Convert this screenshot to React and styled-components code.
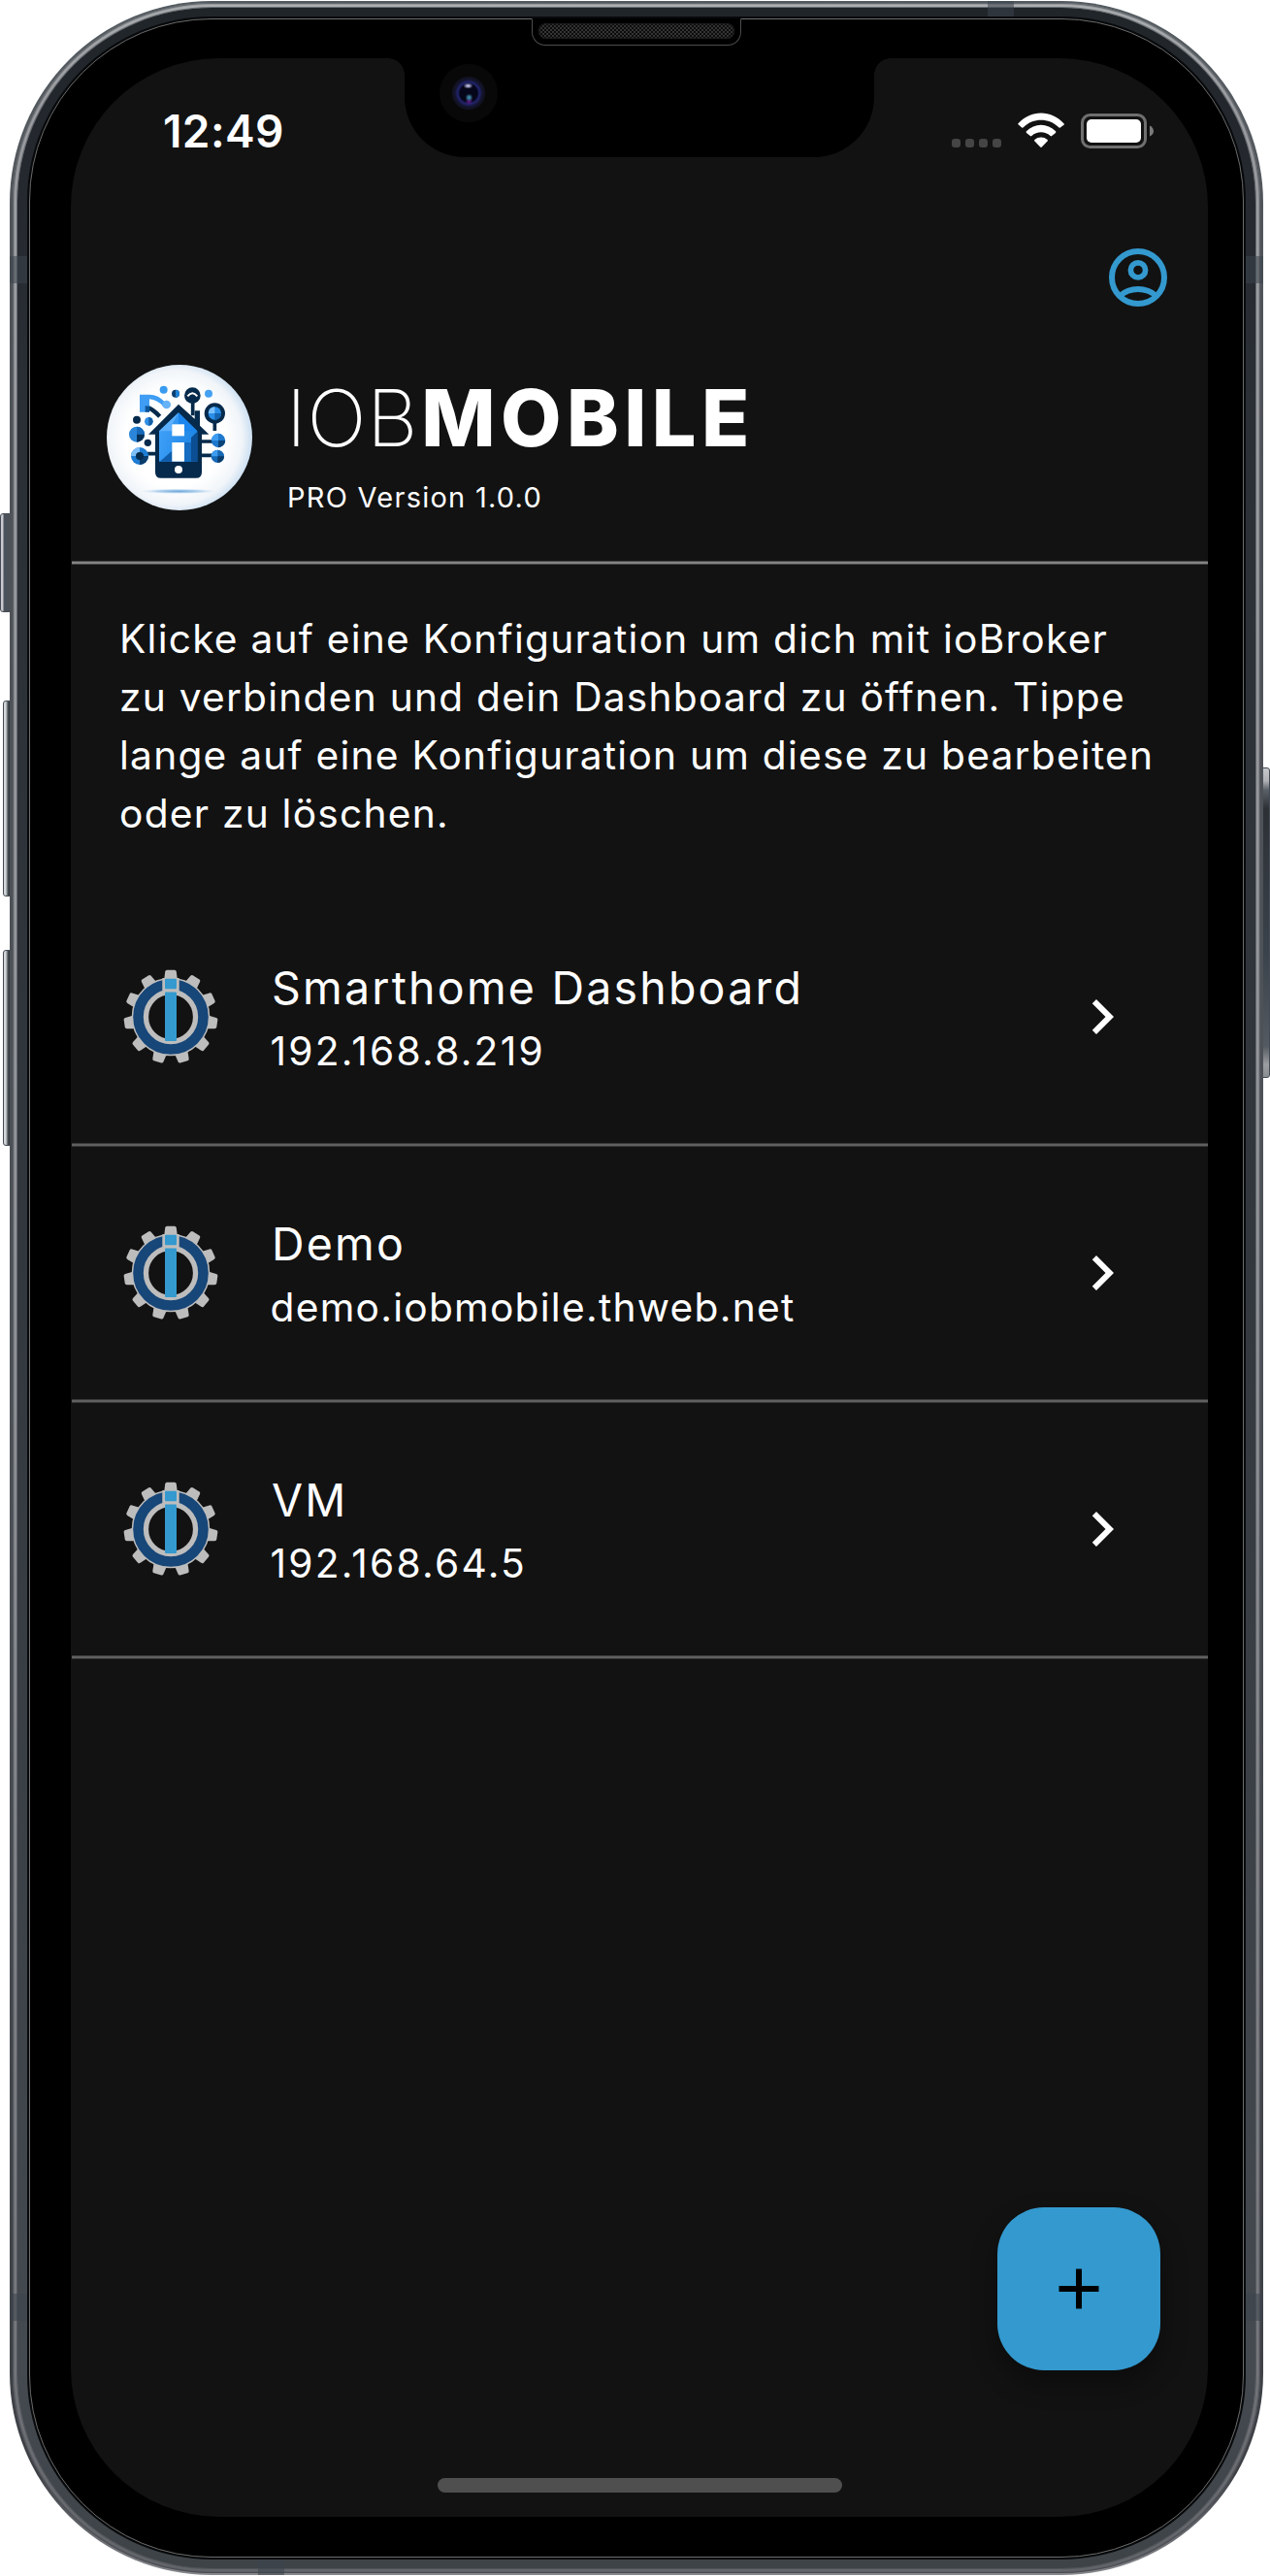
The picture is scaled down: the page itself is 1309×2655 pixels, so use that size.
import React from "react";
import styled, { createGlobalStyle } from "styled-components";

const GlobalStyle = createGlobalStyle`
  html, body { margin: 0; padding: 0; background: #fff; }
  * { box-sizing: border-box; }
`;

const ACCENT = "#3399cf";
const SURFACE = "#121212";

/* ---------- device ---------- */

const Device = styled.div`
  position: relative;
  width: 1309px;
  height: 2655px;
  padding: 1px 7px 1px 10px;
  overflow: hidden;
  background: #fff;
  font-family: Inter, "Liberation Sans", sans-serif;
  color: #fff;
`;

const Rim = styled.div`
  position: relative;
  height: 100%;
  padding: 2px 3px;
  border-radius: 208px;
  background: linear-gradient(#535b60, #50545a 10%, #4b4f56 60%, #3c3f44 96%, #85878c);
`;

const Highlight = styled.div`
  height: 100%;
  padding: 5px;
  border-radius: 205px;
  background: linear-gradient(#b4b7b9, #a2a4a8 4%, #96989d 50%, #77797e 92%, #66686d);
  box-shadow: inset 0 0 2px 1px rgba(60, 64, 70, 0.9);
`;

const Band = styled.div`
  height: 100%;
  padding: 9px 10px;
  border-radius: 200px;
  background: linear-gradient(#20252a, #2a2e35 15%, #33373e 50%, #444a50 92%, #3d4347);
  box-shadow: 0 0 1px 1px rgba(70, 74, 80, 0.7);
`;

const Gasket = styled.div`
  height: 100%;
  padding: 2px;
  border-radius: 190px;
  background: #07090b;
`;

const Glass = styled.div`
  position: relative;
  height: 100%;
  padding: 40px 36px 41px 42px;
  border: 1px solid #6c6c6c;
  border-radius: 188px;
  background: #000;
`;

const SideButton = styled.div`
  position: absolute;
  left: ${(p) => p.$x}px;
  top: ${(p) => p.$y}px;
  width: ${(p) => p.$w}px;
  height: ${(p) => p.$h}px;
  border: 1px solid #454b54;
  border-radius: ${(p) => (p.$right ? "0 3px 3px 0" : "3px 0 0 3px")};
  background: ${(p) =>
    p.$right
      ? "linear-gradient(#c5c7ca 0, #b0b2b5 4%, #5b6168 7%, #2d3136 13%, #3a424b 60%, #535a61 90%, #9b9da0 96%, #8b8e90)"
      : p.$flat
      ? "linear-gradient(90deg, #c9cbd0 0 2px, #4b525c 3px, #4c5157)"
      : "linear-gradient(90deg, #d4d8da 0 2px, #8a9196 3px, #30373d 5px, #3a434b)"};
`;

const Antenna = styled.div`
  position: absolute;
  left: ${(p) => p.$x}px;
  top: ${(p) => p.$y}px;
  width: ${(p) => p.$w}px;
  height: ${(p) => p.$h}px;
  background: rgba(60, 68, 76, 0.55);
`;

const Speaker = styled.div`
  position: absolute;
  left: 517px;
  top: -1px;
  width: 216px;
  height: 28px;
  padding: 4px 6px;
  border: 1px solid #4c4c4c;
  border-top-color: #000;
  border-radius: 0 0 14px 14px;
  background: #000;
`;

const Grille = styled.div`
  height: 16px;
  border-radius: 8px;
  background: repeating-conic-gradient(#343434 0 25%, #0c0c0c 0 50%) 0 0 / 4px 4px;
  box-shadow: inset 0 0 2px 1px #1b1b1b;
`;

/* ---------- screen ---------- */

const Screen = styled.div`
  position: relative;
  display: flex;
  flex-direction: column;
  height: 100%;
  border-radius: 153px;
  overflow: hidden;
  background: ${SURFACE};
`;

const Notch = styled.div`
  position: absolute;
  left: 344px;
  top: 0;
  width: 484px;
  height: 102px;
  border-radius: 0 0 62px 62px;
  background: #000;

  &::before,
  &::after {
    content: "";
    position: absolute;
    top: 0;
    width: 17px;
    height: 17px;
  }
  &::before {
    right: 100%;
    background: radial-gradient(circle at 0 100%, transparent 16.5px, #000 17px);
  }
  &::after {
    left: 100%;
    background: radial-gradient(circle at 100% 100%, transparent 16.5px, #000 17px);
  }
`;

const Camera = styled.div`
  position: absolute;
  left: 36px;
  top: 6px;
  width: 60px;
  height: 60px;
  border-radius: 50%;
  background:
    radial-gradient(ellipse 5px 3px at 29.5px 22.5px, #b9b9e0 20%, transparent 100%),
    radial-gradient(circle 4px at 30.5px 34.5px, #3e8ba6 20%, transparent 100%),
    radial-gradient(circle 4px at 30.5px 38.5px, #5c1a80 10%, transparent 100%),
    radial-gradient(circle at 50% 50%, #06061a 9px, #20246b 11px, #1b1d52 12.5px, #14142c 14px, #111122 16.5px, #080808 17.5px);
`;

const StatusBar = styled.div`
  flex: none;
  display: flex;
  align-items: flex-start;
  justify-content: space-between;
  height: 190px;
  padding: 56px 55px 0 95px;
`;

const Time = styled.div`
  font-size: 46px;
  line-height: 38px;
  font-weight: 600;
  letter-spacing: 0.4px;
`;

const StatusIcons = styled.div`
  display: flex;
  gap: 17px;
  height: 38px;
`;

const Dots = styled.div`
  display: flex;
  gap: 5px;
  padding-top: 27px;
`;

const Dot = styled.span`
  width: 9px;
  height: 9px;
  border-radius: 3px;
  background: #454545;
`;

const AppBar = styled.div`
  flex: none;
  display: flex;
  justify-content: flex-end;
  height: 126px;
  padding-right: 36px;
`;

const Brand = styled.header`
  flex: none;
  display: flex;
  gap: 37px;
  height: 202px;
  padding-left: 37px;
`;

const BrandText = styled.div`
  padding-top: 13px;
`;

const BrandName = styled.h1`
  margin: 0 0 0 -2px;
  font-size: 81px;
  line-height: 84px;
  white-space: nowrap;
`;

const Thin = styled.span`
  font-weight: 200;
  letter-spacing: 0.8px;
`;

const Heavy = styled.span`
  margin-left: 3px;
  font-weight: 800;
  letter-spacing: 5.4px;
`;

const Version = styled.div`
  margin-top: 19px;
  margin-left: -1px;
  font-size: 29px;
  line-height: 41px;
  letter-spacing: 1.25px;
`;

const Divider = styled.div`
  flex: none;
  height: 4px;
  margin-left: 1px;
  background: linear-gradient(${(p) => p.$edge} 0 1px, ${(p) => p.$core} 1px 3px, ${(p) => p.$edge} 3px);
`;

const Intro = styled.p`
  flex: none;
  margin: 0;
  height: 336px;
  padding: 47px 0 0 50px;
  font-size: 40.7px;
  line-height: 60px;
  letter-spacing: 1.23px;
  white-space: nowrap;
`;

const Row = styled.div`
  flex: none;
  display: flex;
  align-items: flex-start;
  height: 260px;
  padding: 80px 73px 0 53px;
`;

const RowText = styled.div`
  flex: 1;
  margin: -10px 0 0 54px;
`;

const RowTitle = styled.div`
  font-size: 46.5px;
  line-height: 60px;
  letter-spacing: 2.2px;
`;

const RowHost = styled.div`
  margin-top: 6px;
  margin-left: -1.5px;
  font-size: 40.7px;
  line-height: 60px;
  letter-spacing: ${(p) => (p.$numeric ? 2.25 : 1.25)}px;
`;

const Chevron = styled.svg`
  margin-top: 14px;
`;

const AddButton = styled.button`
  position: absolute;
  right: 49px;
  bottom: 151px;
  display: flex;
  align-items: center;
  justify-content: center;
  width: 168px;
  height: 168px;
  padding: 0;
  border: 0;
  border-radius: 48px;
  background: ${ACCENT};
  box-shadow: 0 12px 26px 2px rgba(0, 0, 0, 0.32);
`;

const HomeIndicator = styled.div`
  position: absolute;
  left: 378px;
  bottom: 25px;
  width: 417px;
  height: 15px;
  border-radius: 8px;
  background: #4f4f4f;
`;

/* ---------- drawings ---------- */

const Wifi = () => (
  <svg width="48" height="38" viewBox="0 0 48 38" fill="#fff">
    <path d="M0.5 11.2 C13.6 -3.2 34.4 -3.2 47.5 11.2 Q48.3 12 47.5 12.8 L43.8 15.4 Q43 16 42.2 15.2 C32 5.4 16 5.4 5.8 15.2 Q5 16 4.2 15.4 L0.5 12.2 Q-0.1 11.7 0.5 11.2Z" />
    <path d="M8.9 19.3 C17.3 10.4 30.7 10.4 39.1 19.3 Q39.8 20.1 39 20.9 L35.2 24.1 Q34.4 24.7 33.6 24 C28.1 19 19.9 19 14.4 24 Q13.6 24.7 12.8 24.1 L9 20.9 Q8.2 20.1 8.9 19.3Z" />
    <path d="M17.4 28 C21.2 24.7 26.8 24.7 30.6 28 Q31.3 28.8 30.6 29.6 L24.8 35.6 Q24 36.4 23.2 35.6 L17.4 29.6 Q16.7 28.8 17.4 28Z" />
  </svg>
);

const Battery = () => (
  <svg width="76" height="38" viewBox="0 0 76 38">
    <rect x="1.5" y="2.5" width="65" height="33" rx="8" fill="none" stroke="#6f6f6f" strokeWidth="3" />
    <rect x="6" y="7" width="56" height="24" rx="5" fill="#fff" />
    <path d="M71 13.500 Q75 15.500 75 19.200 Q75 22.800 71 24.500Z" fill="#7b7b7b" />
  </svg>
);

const Account = () => (
  <svg width="72" height="72" viewBox="0 0 72 72" fill="none" stroke={ACCENT} strokeWidth="6">
    <circle cx="36" cy="36" r="27" />
    <circle cx="36" cy="28.400" r="7.600" strokeWidth="5.700" />
    <path d="M17 55.200 A29 29 0 0 1 55 55.200" />
  </svg>
);

const Logo = () => (
  <svg width="150" height="150" viewBox="90 78 450 450">
    <defs>
      <radialGradient id="disc" cx="0.47" cy="0.5" r="0.56">
        <stop offset="0.6" stopColor="#fff" />
        <stop offset="0.82" stopColor="#f1f5f9" />
        <stop offset="1" stopColor="#bcd6ef" />
      </radialGradient>
      <radialGradient id="glow">
        <stop offset="0" stopColor="#6aa6da" />
        <stop offset="0.5" stopColor="#b5d3ee" />
        <stop offset="1" stopColor="#fff" stopOpacity="0" />
      </radialGradient>
      <linearGradient id="wall" x1="0" x2="1" y2="0.4">
        <stop offset="0" stopColor="#45a4fb" />
        <stop offset="1" stopColor="#1e86e4" />
      </linearGradient>
    </defs>
    <circle cx="315" cy="303" r="225" fill="url(#disc)" />
    <ellipse cx="312" cy="469" rx="136" ry="9" fill="url(#glow)" />
    <g stroke="#052a4b" strokeWidth="11" fill="none">
      <path d="M356 185 V235 M424 250 V282 M380 315 H420 M380 358 H420 M212 353 H245" />
      <path d="M215 210 Q230 212 254 238" strokeWidth="13" />
    </g>
    <path d="M192 170 H222 Q250 170 272 195 L264 206 Q246 186 222 184 V224 H192Z" fill="#3f9df3" />
    <path d="M209 205 L224 206 L222 224 H209Z" fill="#0b5597" />
    <circle cx="275" cy="201" r="13" fill="#66b2f6" />
    <circle cx="266" cy="155" r="12" fill="#3a9bf0" />
    <circle cx="303" cy="167" r="12" fill="#0d3f70" />
    <path d="M303 155 A12 12 0 0 1 303 179Z" fill="#1f7fd2" />
    <circle cx="405" cy="167" r="12" fill="#45a1f2" />
    <circle cx="355" cy="173" r="25" fill="#052a4b" />
    <path d="M340 175 Q355 156 370 175" fill="none" stroke="#fff" strokeWidth="6" />
    <circle cx="424" cy="228" r="32" fill="#052a4b" />
    <circle cx="424" cy="228" r="20" fill="#2a8ee8" />
    <path d="M424 208 A20 20 0 0 0 404 228 H424Z" fill="#7cc0fb" />
    <path d="M424 248 A20 20 0 0 0 444 228 H424Z" fill="#1563ae" />
    <circle cx="183" cy="248" r="12" fill="#052a4b" />
    <circle cx="220" cy="253" r="13" fill="#318fe6" />
    <path d="M220 240 A13 13 0 0 1 220 266Z" fill="#1460a6" />
    <circle cx="183" cy="293" r="24" fill="#2b86d9" />
    <path d="M183 269 A24 24 0 0 1 207 293 H183Z" fill="#1769b9" />
    <path d="M183 317 A24 24 0 0 0 207 293 H183Z" fill="#062f56" />
    <circle cx="217" cy="319" r="11" fill="#052a4b" />
    <circle cx="192" cy="360" r="27" fill="#1e7cd2" />
    <path d="M192 333 A27 27 0 0 0 165 360 H192Z" fill="#7dbff8" />
    <path d="M192 387 A27 27 0 0 0 219 360 H192Z" fill="#0a3c6c" />
    <circle cx="192" cy="360" r="12" fill="#052a4b" />
    <circle cx="435" cy="312" r="21.500" fill="#1d78cc" />
    <path d="M435 290.500 A21.500 21.500 0 0 0 413.500 312 H435Z" fill="#3d9cf0" />
    <path d="M435 333.500 A21.500 21.500 0 0 0 456.500 312 H435Z" fill="#0b4478" />
    <circle cx="433" cy="361" r="20" fill="#1668b5" />
    <path d="M433 341 A20 20 0 0 0 413 361 H433Z" fill="#3d9cf0" />
    <path d="M433 381 A20 20 0 0 0 453 361 H433Z" fill="#0a3c6c" />
    <path d="M312 200 L362 245 V220 H378 V266 L406 293 H384 V410 Q384 428 366 428 H258 Q240 428 240 410 V293 H219Z" fill="#052a4b" />
    <path d="M312 226 L370 283 V377 H252 V283Z" fill="url(#wall)" />
    <path d="M312 226 L370 283 H330 V262 H312Z" fill="#1a86ee" />
    <path d="M312 226 L292 262 V283 H252Z" fill="#5cb0fc" />
    <path d="M370 285 L351 303 V377 H370Z" fill="#0b4e93" />
    <path d="M330 318 H351 V377 H330Z" fill="#156cc0" />
    <path d="M292 344 V377 H254Z" fill="#0f5cab" />
    <rect x="292" y="262" width="38" height="36" fill="#fff" />
    <rect x="292" y="318" width="38" height="59" fill="#fff" />
    <circle cx="312" cy="402" r="12" fill="#fff" />
  </svg>
);

const TEETH = Array.from({ length: 11 }, (_, i) => (i * 360) / 11);

const Gear = () => (
  <svg width="100" height="100" viewBox="-50 -50 100 100">
    {TEETH.map((angle) => (
      <path
        key={angle}
        d="M-7 -37 L-5.800 -46.500 Q-5.500 -48.300 -4 -48.300 H4 Q5.500 -48.300 5.800 -46.500 L7 -37Z"
        fill="#bdbdbd"
        transform={`rotate(${angle})`}
      />
    ))}
    <circle r="31.600" fill="none" stroke="#bdbdbd" strokeWidth="17.400" />
    <circle r="33.500" fill="none" stroke="#174678" strokeWidth="10.600" />
    <rect x="-8.700" y="-40" width="17.400" height="15" fill="#bdbdbd" />
    <rect x="-6" y="-39.300" width="12" height="10.600" rx="1" fill={ACCENT} />
    <rect x="-6" y="-25.500" width="12" height="50.500" rx="1" fill={ACCENT} />
  </svg>
);

const configurations = [
  { name: "Smarthome Dashboard", host: "192.168.8.219" },
  { name: "Demo", host: "demo.iobmobile.thweb.net" },
  { name: "VM", host: "192.168.64.5" },
];

function Configuration({ name, host }) {
  return (
    <>
      <Row>
        <Gear />
        <RowText>
          <RowTitle>{name}</RowTitle>
          <RowHost $numeric={/^[\d.]+$/.test(host)}>{host}</RowHost>
        </RowText>
        <Chevron width="72" height="72" viewBox="0 0 24 24" fill="#fff">
          <path d="M10 6 8.590 7.410 13.170 12 8.590 16.590 10 18 16 12z" />
        </Chevron>
      </Row>
      <Divider $edge="#393939" $core="#606060" />
    </>
  );
}

export default function App() {
  return (
    <>
      <GlobalStyle />
      <Device>
        <SideButton $x={0} $y={529} $w={12} $h={102} $flat />
        <SideButton $x={3} $y={722} $w={9} $h={202} />
        <SideButton $x={3} $y={979} $w={9} $h={202} />
        <SideButton $x={1300} $y={791} $w={9} $h={320} $right />
        <Rim>
          <Highlight>
            <Band>
              <Gasket>
                <Glass>
                  <Speaker>
                    <Grille />
                  </Speaker>
                  <Screen>
                    <StatusBar>
                      <Time>12:49</Time>
                      <StatusIcons>
                        <Dots>
                          <Dot />
                          <Dot />
                          <Dot />
                          <Dot />
                        </Dots>
                        <Wifi />
                        <Battery />
                      </StatusIcons>
                    </StatusBar>
                    <AppBar>
                      <Account />
                    </AppBar>
                    <Brand>
                      <Logo />
                      <BrandText>
                        <BrandName>
                          <Thin>IOB</Thin>
                          <Heavy>MOBILE</Heavy>
                        </BrandName>
                        <Version>PRO Version 1.0.0</Version>
                      </BrandText>
                    </Brand>
                    <Divider $edge="#494949" $core="#848484" />
                    <Intro>
                      Klicke auf eine Konfiguration um dich mit ioBroker
                      <br />
                      zu verbinden und dein Dashboard zu öffnen. Tippe
                      <br />
                      lange auf eine Konfiguration um diese zu bearbeiten
                      <br />
                      oder zu löschen.
                    </Intro>
                    {configurations.map((c) => (
                      <Configuration key={c.name} {...c} />
                    ))}
                    <Notch>
                      <Camera />
                    </Notch>
                    <AddButton aria-label="+">
                      <svg width="42" height="42" viewBox="0 0 42 42" stroke="#000" strokeWidth="6">
                        <path d="M21 0.500 V41.500 M0.500 21 H41.500" />
                      </svg>
                    </AddButton>
                    <HomeIndicator />
                  </Screen>
                </Glass>
              </Gasket>
            </Band>
          </Highlight>
          <Antenna $x={1008} $y={0} $w={27} $h={16} />
          <Antenna $x={0} $y={263} $w={18} $h={28} />
          <Antenna $x={1274} $y={263} $w={18} $h={28} />
          <Antenna $x={0} $y={2363} $w={18} $h={28} />
          <Antenna $x={1274} $y={2363} $w={18} $h={28} />
          <Antenna $x={256} $y={2637} $w={27} $h={16} />
        </Rim>
      </Device>
    </>
  );
}
